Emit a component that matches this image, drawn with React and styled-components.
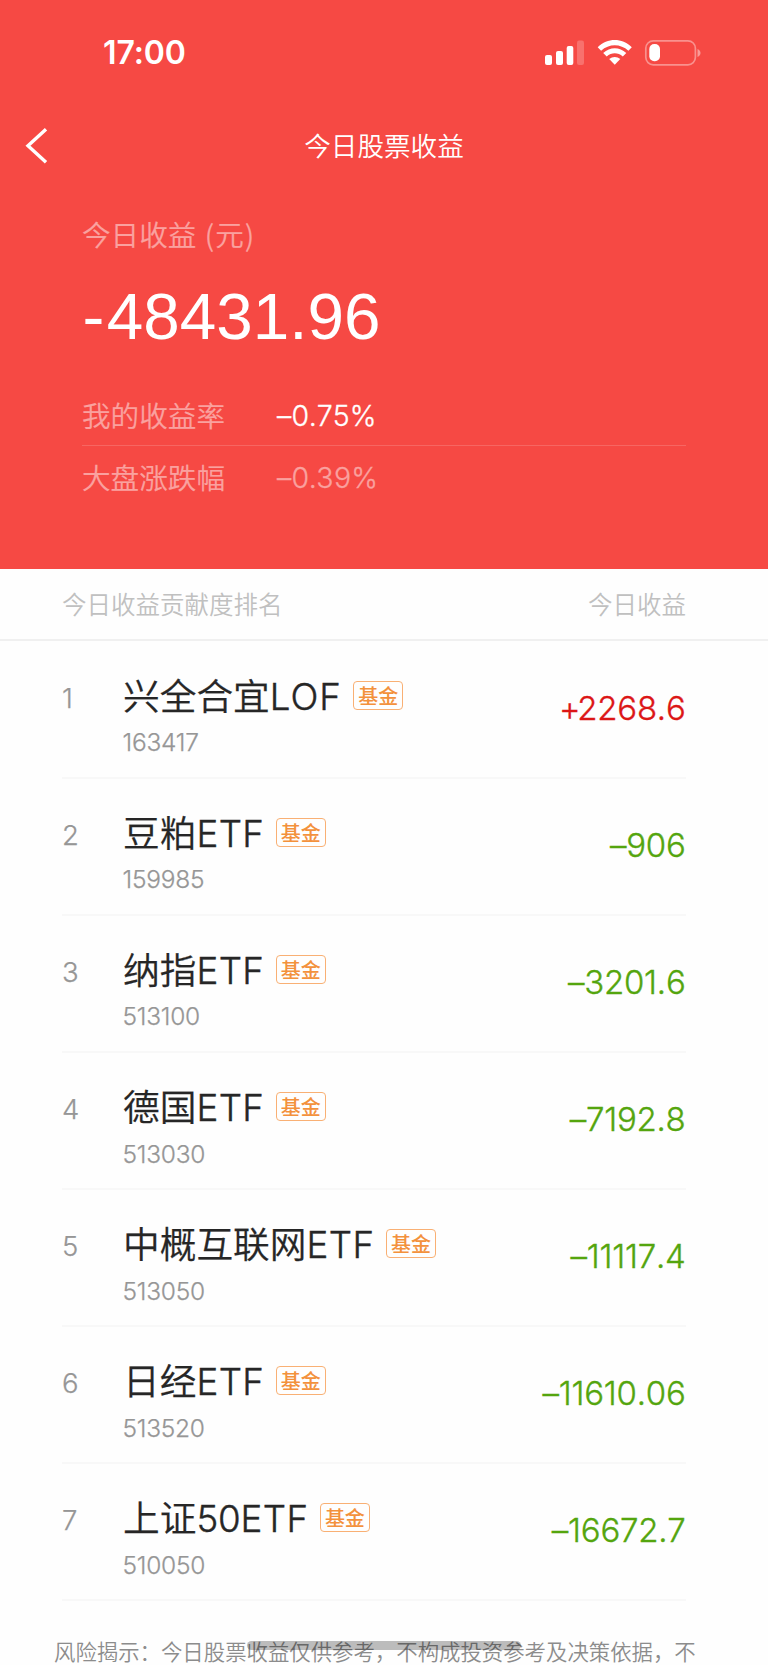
import React from 'react';
import styled, { createGlobalStyle } from 'styled-components';

const cjk = '"Noto Sans CJK SC", sans-serif';
const latin = 'Inter, "Noto Sans CJK SC", sans-serif';

const GlobalStyle = createGlobalStyle`
  * { box-sizing: border-box; }
  body { margin: 0; background: #fff; font-family: ${cjk}; }
`;

const Screen = styled.div`
  position: relative;
  width: 768px;
  height: 1665px;
  overflow: hidden;
  background: #fefefe;
  white-space: nowrap;
`;

const Hero = styled.header`
  height: 568.5px;
  background: #f64944;
  color: #fff;
`;

const StatusBar = styled.div`
  display: flex;
  justify-content: space-between;
  align-items: center;
  height: 105px;
  padding: 0 67px 0 103px;
`;

const Clock = styled.time`
  font: 600 32px/40px ${latin};
  letter-spacing: -0.1px;
`;

const StatusIcons = styled.svg`
  display: block;
  width: 160px;
  height: 30px;
`;

const NavBar = styled.nav`
  display: grid;
  grid-template-columns: 100px 1fr 100px;
  align-items: center;
  height: 81px;
`;

const BackButton = styled.button`
  display: block;
  width: 60px;
  height: 44px;
  padding: 0 0 0 22px;
  border: 0;
  background: none;
  svg { display: block; }
`;

const PageTitle = styled.h1`
  margin: 0;
  padding-bottom: 1px;
  text-align: center;
  font: 350 26.6px/40px ${cjk};
`;

const Summary = styled.section`
  padding: 27px 82px 0;
`;

const SummaryLabel = styled.div`
  font: 350 28.6px/42px ${cjk};
  -webkit-text-stroke: 0.2px currentColor;
  color: #faa19f;
`;

const Unit = styled.span`
  margin-left: 2px;
  letter-spacing: 1px;
`;

const Total = styled.div`
  margin-top: 23px;
  font: 400 65.6px/78px "Liberation Sans", sans-serif;
`;

const Sign = styled.span`
  margin: 0 2.5px 0 0.5px;
`;

const MetricList = styled.div`
  margin-top: 28px;
`;

const Metric = styled.div`
  display: flex;
  align-items: center;
  height: 61.5px;
  padding-top: 3px;
  border-bottom: ${p => (p.$last ? '0' : '1px solid rgba(255, 255, 255, 0.16)')};
`;

const MetricName = styled.span`
  width: 195px;
  padding-bottom: 2px;
  font: 350 28.6px/42px ${cjk};
  -webkit-text-stroke: 0.2px currentColor;
  color: #faa19f;
`;

const MetricValue = styled.span`
  font: 350 28.5px/42px ${latin};
  -webkit-text-stroke: 0.3px currentColor;
  letter-spacing: 0.3px;
  color: ${p => (p.$dim ? '#faa19f' : '#fff')};
`;

const ListHeader = styled.div`
  display: flex;
  justify-content: space-between;
  height: 72.3px;
  padding: 15px 82px 0 62px;
  border-bottom: 2px solid #f0f0f0;
  font: 350 24.5px/40px ${cjk};
  color: #c0c0c0;
`;

const Ranking = styled.ol`
  margin: 0;
  padding: 0.7px 82px 0 62px;
  list-style: none;
`;

const Item = styled.li`
  display: grid;
  grid-template-columns: 61px 1fr auto;
  height: 137.05px;
  border-bottom: 2px solid #f8f8f8;
`;

const Rank = styled.span`
  padding-top: 36.3px;
  font: 350 27.5px/40px ${latin};
  -webkit-text-stroke: 0.25px currentColor;
  color: #969696;
`;

const Holding = styled.div`
  padding-top: 30.3px;
`;

const NameLine = styled.div`
  display: flex;
  align-items: center;
  height: 50px;
`;

const Name = styled.span`
  padding-bottom: 3px;
  font: 350 36.7px/50px ${cjk};
  -webkit-text-stroke: 0.25px currentColor;
  color: #262626;
`;

const NameLatin = styled.span`
  font-family: ${latin};
  -webkit-text-stroke-width: 0.4px;
  letter-spacing: ${p => p.$tracking || 0.4}px;
`;

const Tag = styled.span`
  display: flex;
  align-items: center;
  justify-content: center;
  width: 50px;
  height: 29px;
  margin: 0 0 2.5px 11.5px;
  border: 1.5px solid #f9b074;
  border-radius: 4px;
  font: 500 20px/26px ${cjk};
  color: #f3913c;
`;

const Code = styled.div`
  margin: 5.6px 0 0 -0.5px;
  font: 350 24.5px/30px ${latin};
  -webkit-text-stroke: 0.25px currentColor;
  letter-spacing: -0.25px;
  color: #969696;
`;

const Amount = styled.span`
  padding: 45.5px 0.5px 0 0;
  font: 350 33px/42px ${latin};
  font-kerning: none;
  -webkit-text-stroke: 0.35px currentColor;
  letter-spacing: -0.25px;
  color: ${p => (p.$up ? '#dc1616' : '#54a50e')};
`;

const AmountSign = styled.span`
  margin-right: ${p => (p.$up ? '-3px' : '0')};
`;

const Disclaimer = styled.p`
  margin: 0;
  padding: 35.2px 0 0 54px;
  font: 350 21.4px/30px ${cjk};
  color: #8c8c8c;
`;

const HomeIndicator = styled.div`
  position: absolute;
  left: 247px;
  bottom: 15px;
  width: 274px;
  height: 9px;
  border-radius: 5px;
  background: rgba(0, 0, 0, 0.26);
`;

const holdings = [
  { cn: '兴全合宜', en: 'LOF', tracking: 1, code: '163417', amount: '+2268.6', up: true },
  { cn: '豆粕', en: 'ETF', code: '159985', amount: '–906' },
  { cn: '纳指', en: 'ETF', code: '513100', amount: '–3201.6' },
  { cn: '德国', en: 'ETF', code: '513030', amount: '–7192.8' },
  { cn: '中概互联网', en: 'ETF', code: '513050', amount: '–11117.4' },
  { cn: '日经', en: 'ETF', code: '513520', amount: '–11610.06' },
  { cn: '上证', digits: '50', en: 'ETF', code: '510050', amount: '–16672.7' },
];

function StatusGlyphs() {
  return (
    <StatusIcons viewBox="541 37 160 30" fill="#fff">
      <rect x="545" y="54" width="7" height="10" rx="2" />
      <rect x="556" y="50" width="7" height="14" rx="2" />
      <rect x="566.7" y="45" width="6.6" height="19" rx="2" />
      <rect x="577" y="39.5" width="7" height="24.5" rx="2" opacity="0.22" />
      <path d="M597.7 46.2 C607.5 36.6 622 36.6 631.8 46.2 L628.4 49.7 C620.5 42.3 609 42.3 601.1 49.7 Z" />
      <path d="M603.2 52 C610 45.6 619.5 45.6 626.3 52 L622.8 55.5 C618 51.1 611.5 51.1 606.7 55.5 Z" />
      <path d="M609.2 58.1 C612.5 55.2 617 55.2 620.3 58.1 L614.75 63.8 Z" />
      <rect x="645.8" y="39.8" width="49.6" height="24" rx="7.5" fill="none" stroke="#fff" strokeWidth="1.7" opacity="0.4" />
      <rect x="649.3" y="43" width="10.7" height="17.3" rx="5" />
      <path d="M697.5 48 C701.5 49.5 701.5 54.5 697.5 56 Z" opacity="0.45" />
    </StatusIcons>
  );
}

export default function App() {
  return (
    <Screen>
      <GlobalStyle />
      <Hero>
        <StatusBar>
          <Clock>17:00</Clock>
          <StatusGlyphs />
        </StatusBar>
        <NavBar>
          <BackButton aria-label="返回">
            <svg width="30" height="44" viewBox="0 0 30 44" fill="none" stroke="#fff" strokeWidth="3.4">
              <path d="M24 5.2 L6 21.7 L24 38.2" />
            </svg>
          </BackButton>
          <PageTitle>今日股票收益</PageTitle>
        </NavBar>
        <Summary>
          <SummaryLabel>今日收益 <Unit>(元)</Unit></SummaryLabel>
          <Total><Sign>-</Sign>48431.96</Total>
          <MetricList>
            <Metric>
              <MetricName>我的收益率</MetricName>
              <MetricValue>–0.75%</MetricValue>
            </Metric>
            <Metric $last>
              <MetricName>大盘涨跌幅</MetricName>
              <MetricValue $dim>–0.39%</MetricValue>
            </Metric>
          </MetricList>
        </Summary>
      </Hero>
      <ListHeader>
        <span>今日收益贡献度排名</span>
        <span>今日收益</span>
      </ListHeader>
      <Ranking>
        {holdings.map((h, i) => (
          <Item key={h.code}>
            <Rank>{i + 1}</Rank>
            <Holding>
              <NameLine>
                <Name>
                  {h.cn}
                  {h.digits && <NameLatin $tracking={-0.2}>{h.digits}</NameLatin>}
                  <NameLatin $tracking={h.tracking}>{h.en}</NameLatin>
                </Name>
                <Tag>基金</Tag>
              </NameLine>
              <Code>{h.code}</Code>
            </Holding>
            <Amount $up={h.up}>
              <AmountSign $up={h.up}>{h.amount[0]}</AmountSign>
              {h.amount.slice(1)}
            </Amount>
          </Item>
        ))}
      </Ranking>
      <Disclaimer>风险揭示：今日股票收益仅供参考，不构成投资参考及决策依据，不</Disclaimer>
      <HomeIndicator />
    </Screen>
  );
}
